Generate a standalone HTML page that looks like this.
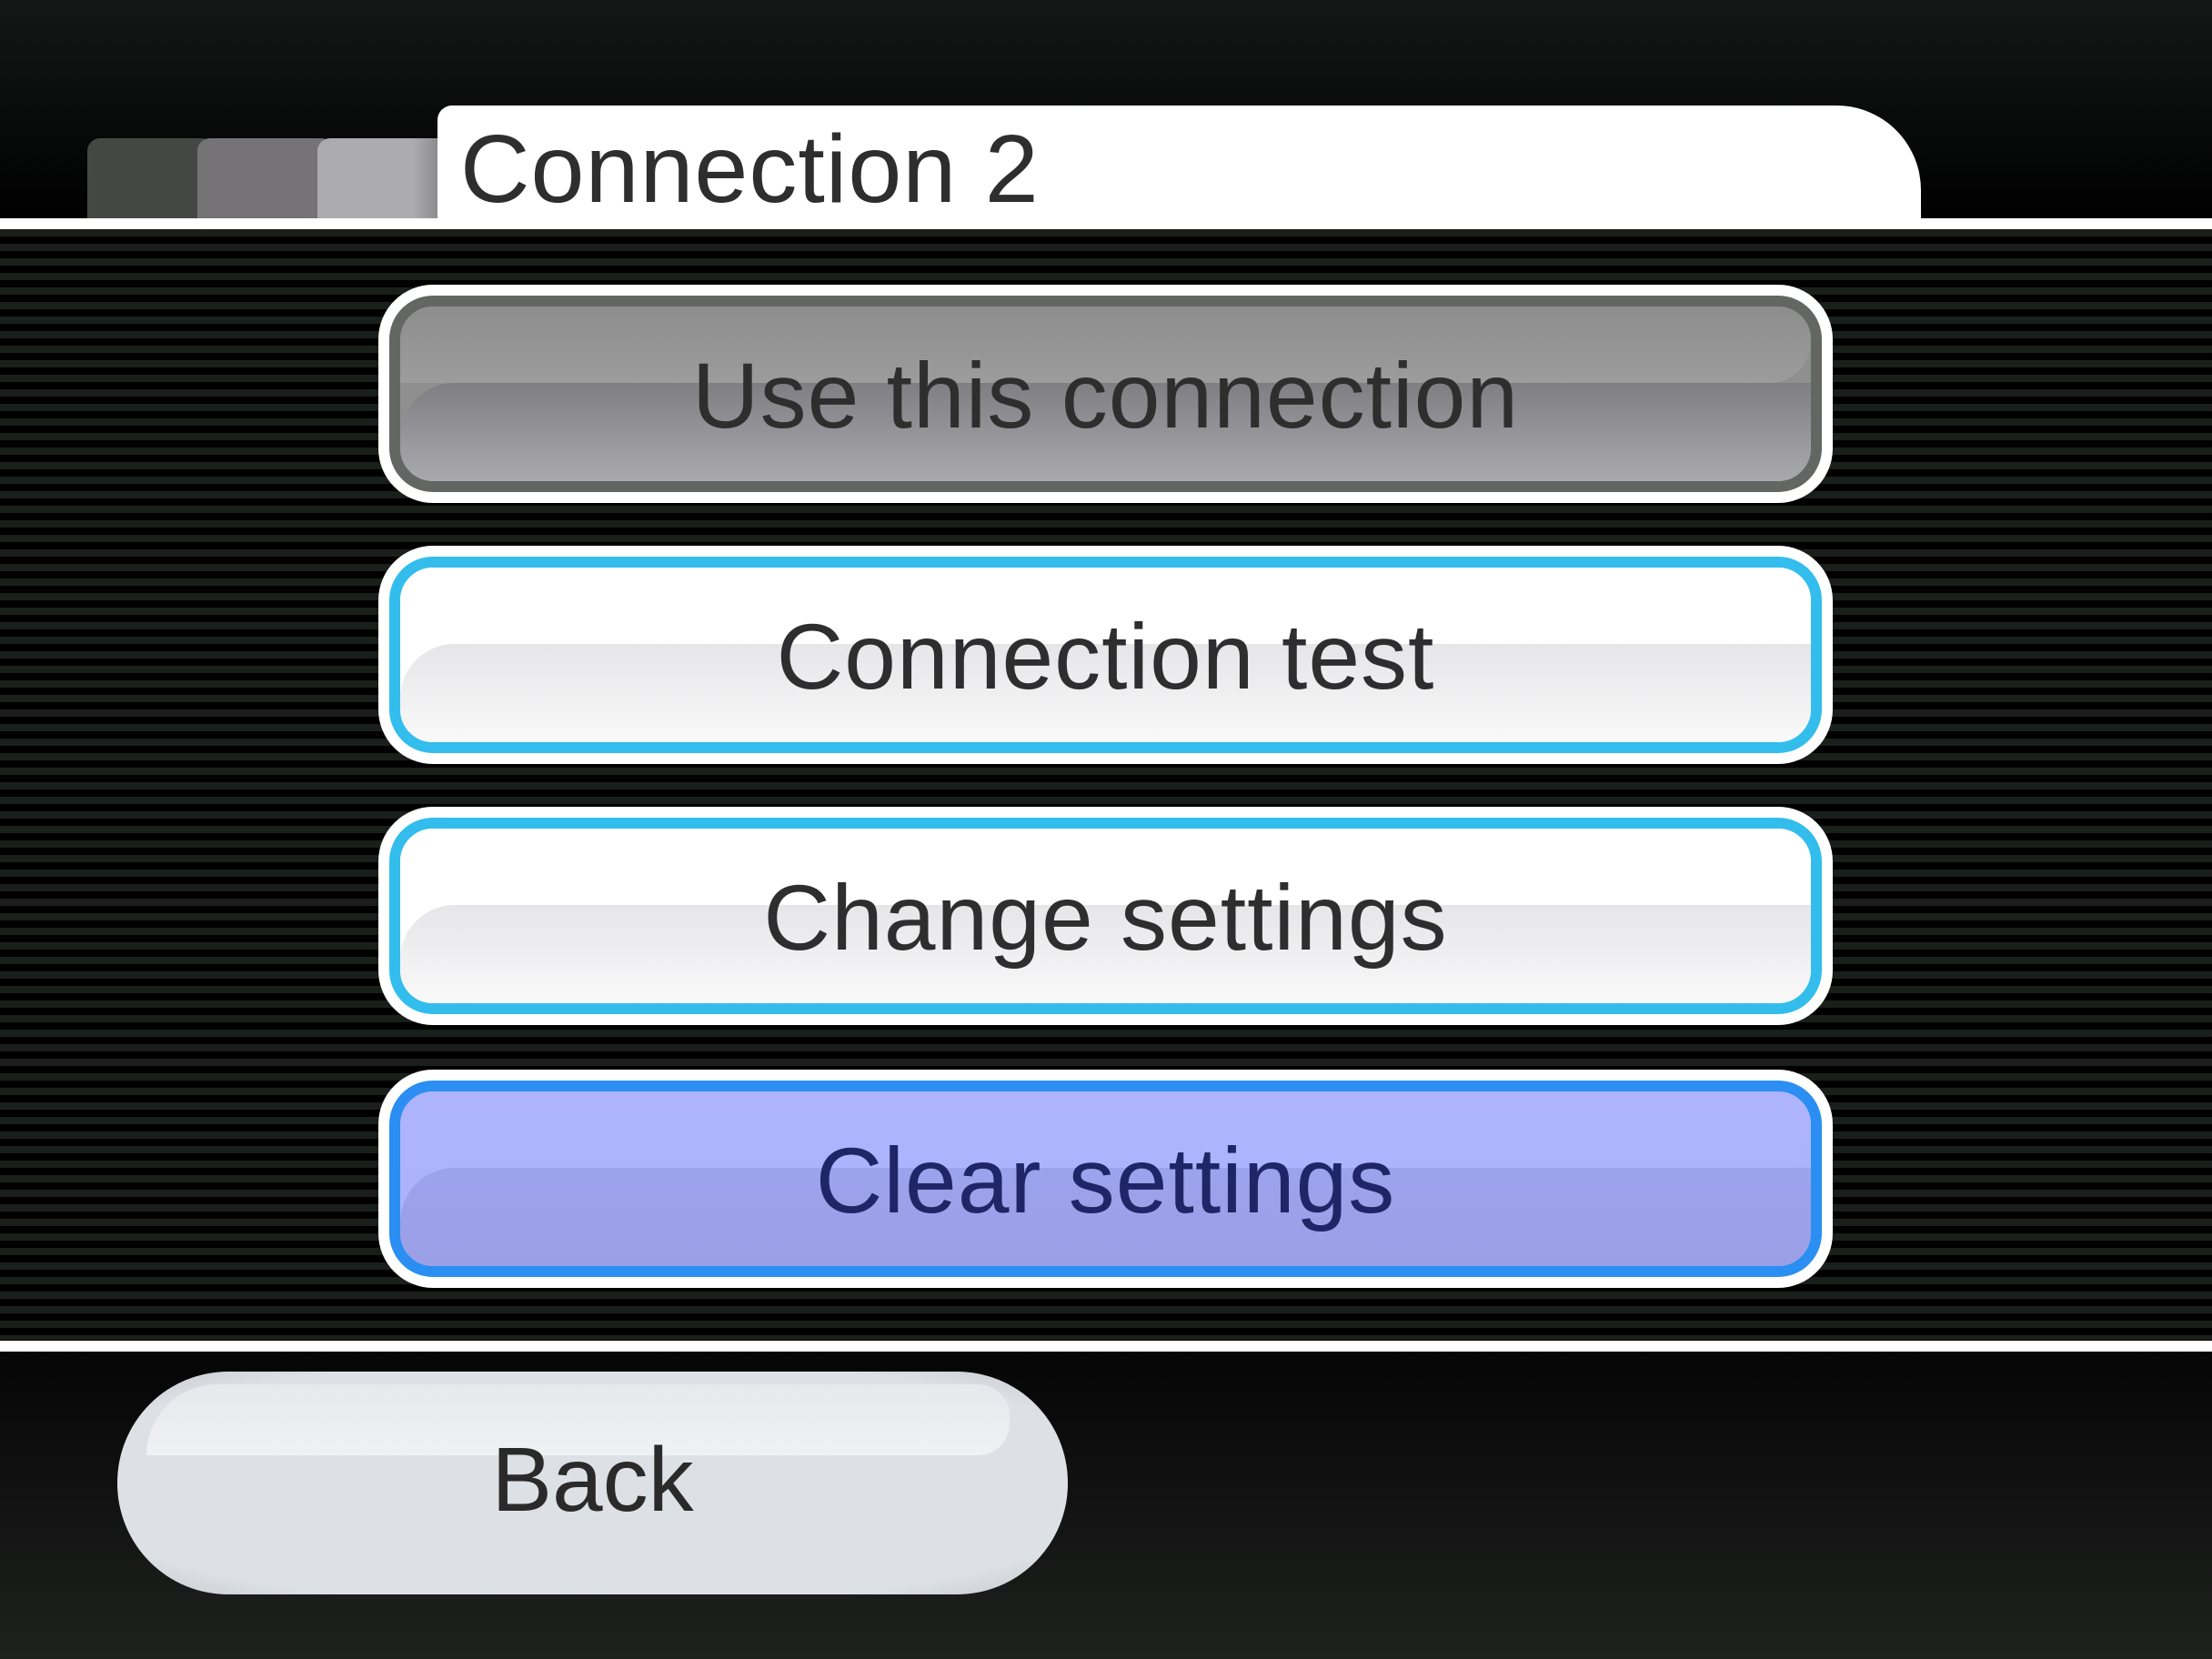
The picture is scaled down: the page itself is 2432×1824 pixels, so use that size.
<!DOCTYPE html>
<html><head><meta charset="utf-8"><style>
html,body{margin:0;padding:0}
body{width:2432px;height:1824px;position:relative;overflow:hidden;background:#000;font-family:"Liberation Sans","DejaVu Sans",sans-serif}
.top{position:absolute;left:0;top:0;width:2432px;height:240px;background:linear-gradient(#151716,#000)}
.tab{position:absolute;top:152px;height:88px;border-radius:14px 14px 0 0}
.title{position:absolute;left:481px;top:116px;width:1631px;height:135px;background:#fff;border-radius:16px 93px 0 0}
.title span{position:absolute;left:25px;top:10px;font-size:106px;color:#2e2e2e;letter-spacing:1px}
.line{position:absolute;left:0;width:2432px;height:12px;background:#fff}
.stripes{position:absolute;left:0;top:252px;width:2432px;height:1221px;background:repeating-linear-gradient(#1b1f1c 0 8px,#000 8px 16px)}
.bottom{position:absolute;left:0;top:1486px;width:2432px;height:338px;background:linear-gradient(#050505,#1f211f)}
.btn{position:absolute;left:416px;width:1599px;height:240px;box-sizing:border-box;border-radius:60px;background:#fff;padding:12px}
.bd{width:100%;height:100%;box-sizing:border-box;border:12px solid;border-radius:48px;position:relative;overflow:hidden}
.gl{position:absolute;left:0;top:84px;right:0;bottom:0;border-radius:60px 0 0 0}
.gt{position:absolute;left:0;top:0;right:0;height:84px;border-radius:0 0 45px 0}
.bd span{position:absolute;left:0;right:0;top:50%;transform:translateY(-48%);text-align:center;font-size:102px;letter-spacing:1px;color:#2e2e2e}
.back{position:absolute;left:129px;top:1508px;width:1045px;height:245px;border-radius:122px/122px;background:radial-gradient(ellipse at 50% 50%,#dde1e5 80%,#c5c9cd 100%);overflow:hidden}
.back .hl{position:absolute;left:32px;top:14px;right:64px;height:78px;background:linear-gradient(#e6e9ec,#f0f1f3);border-radius:90px 40px 40px 0}
.back span{position:absolute;left:0;right:0;top:62px;text-align:center;font-size:100px;color:#2a2a2a}
</style></head><body>
<div class="top"></div>
<div class="tab" style="left:96px;width:140px;background:#454745"></div>
<div class="tab" style="left:217px;width:150px;background:#757376"></div>
<div class="tab" style="left:349px;width:150px;background:linear-gradient(90deg,#acabae 70%,#78777a)"></div>
<div class="title"><span>Connection 2</span></div>
<div class="line" style="top:240px"></div>
<div class="stripes"></div>
<div class="line" style="top:1474px"></div>
<div class="bottom"></div>

<div class="btn" style="top:313px"><div class="bd" style="border-color:#646664;background:#8f8f8f">
<div class="gt" style="background:linear-gradient(#8d8d8d,#9c9c9c)"></div>
<div class="gl" style="background:linear-gradient(#7f7e82,#aaa9ad)"></div><span>Use this connection</span></div></div>

<div class="btn" style="top:600px"><div class="bd" style="border-color:#33bded;background:#fff">
<div class="gt" style="background:#fff"></div>
<div class="gl" style="background:linear-gradient(#e6e5e7,#f9f9fa)"></div><span>Connection test</span></div></div>

<div class="btn" style="top:887px"><div class="bd" style="border-color:#33bded;background:#fff">
<div class="gt" style="background:#fff"></div>
<div class="gl" style="background:linear-gradient(#e6e5e7,#f9f9fa)"></div><span>Change settings</span></div></div>

<div class="btn" style="top:1176px"><div class="bd" style="border-color:#2a8ef2;background:#acb2fc">
<div class="gt" style="background:#adb3fd"></div>
<div class="gl" style="background:linear-gradient(#9ca2ec,#9b9fe6)"></div><span style="color:#1f2567">Clear settings</span></div></div>

<div class="back"><div class="hl"></div><span>Back</span></div>
</body></html>
